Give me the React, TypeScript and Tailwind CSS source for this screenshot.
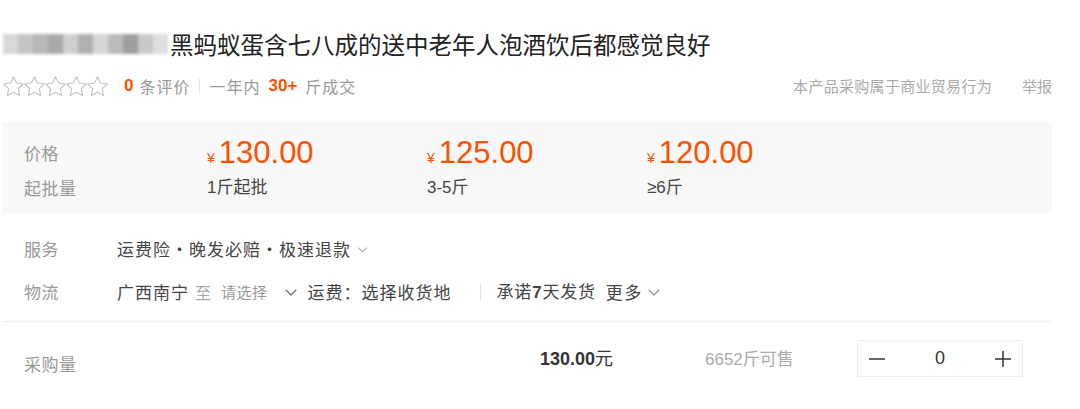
const cjk = "font-['Noto_Sans_CJK_SC',sans-serif]";
const num = "font-['Liberation_Sans','Noto_Sans_CJK_SC',sans-serif]";

const tiers = [
  { price: "130.00", qty: "1斤起批" },
  { price: "125.00", qty: "3-5斤" },
  { price: "120.00", qty: "≥6斤" },
];

const mosaic = ["#d9d9d9", "#c4c4c4", "#b8b8b8", "#a9a9a9", "#cfcfcf", "#b0b0b0", "#d6d6d6", "#bcbcbc", "#9e9e9e", "#c8c8c8", "#dedede"];

function Star() {
  return (
    <svg width="21" height="21" viewBox="2 2 20 20" fill="none" stroke="#c4c4c4" strokeWidth="1.1" strokeLinejoin="round">
      <path d="M12 2.8l2.8 5.9 6.5.9-4.7 4.5 1.2 6.4L12 17.4l-5.8 3.1 1.2-6.4-4.7-4.5 6.5-.9z" />
    </svg>
  );
}

function Chevron({ size = 12, color = "#999" }: { size?: number; color?: string }) {
  return (
    <svg width={size} height={size} viewBox="0 0 12 12" fill="none" stroke={color} strokeWidth="1.2">
      <path d="M1.5 4l4.5 4.5L10.5 4" />
    </svg>
  );
}

export default function App() {
  return (
    <div className={`w-[1080px] h-[409px] bg-white overflow-hidden ${cjk}`}>
      <div className="pl-[3px] w-[1052px]">
        {/* Title */}
        <div className="mt-[30px] h-[28px] flex items-center">
          <div className="flex blur-[1.5px] mr-[2px]">
            {mosaic.map((c, i) => (
              <div key={i} className="w-[15px] h-[20px]" style={{ backgroundColor: c }} />
            ))}
          </div>
          <h1 className="text-[23.5px] leading-[28px] text-[#222]">
            黑蚂蚁蛋含七八成的送中老年人泡酒饮后都感觉良好
          </h1>
        </div>

        {/* Stats */}
        <div className="mt-[16px] h-[24px] flex items-center text-[16px] text-[#999]">
          <div className="flex">
            {[0, 1, 2, 3, 4].map((i) => (
              <Star key={i} />
            ))}
          </div>
          <span className={`ml-[16px] ${num} font-bold text-[#ff5000] text-[17px]`}>0</span>
          <span className="ml-[6px] tracking-[1px]">条评价</span>
          <span className="mx-[9px] w-px h-[16px] bg-[#e5e5e5]" />
          <span className="tracking-[1px]">一年内</span>
          <span className={`ml-[8px] ${num} font-bold text-[#ff5000] text-[17px]`}>30+</span>
          <span className="ml-[8px] tracking-[1px]">斤成交</span>
          <span className="ml-auto text-[15px] text-[#aaa] tracking-[0.3px]">本产品采购属于商业贸易行为</span>
          <span className="ml-[30px] text-[15px] text-[#aaa]">举报</span>
        </div>

        {/* Price box */}
        <div className="mt-[24px] bg-[#f8f8f8] pt-[13px] pb-[13px] pl-[21px]">
          <div className="flex h-[36px] items-center">
            <div className="w-[183px] text-[17px] text-[#999] tracking-[0.5px]">价格</div>
            {tiers.map((t) => (
              <div key={t.price} className="w-[220px] flex items-baseline text-[#ff5000]">
                <span className={`${num} text-[14px] mr-[4px]`}>¥</span>
                <span className={`${num} text-[31px] leading-[36px]`}>{t.price}</span>
              </div>
            ))}
          </div>
          <div className="mt-[5px] flex h-[24px] items-center">
            <div className="w-[183px] text-[17px] text-[#999] tracking-[0.5px]">起批量</div>
            {tiers.map((t) => (
              <div key={t.qty} className={`w-[220px] text-[17px] text-[#444] ${num}`}>
                {t.qty}
              </div>
            ))}
          </div>
        </div>

        {/* Service */}
        <div className="mt-[24px] h-[24px] flex items-center pl-[21px] text-[17px]">
          <div className="w-[93px] text-[#999] tracking-[0.5px]">服务</div>
          <span className="text-[#444] tracking-[1px]">运费险・晚发必赔・极速退款</span>
          <span className="ml-[6px]">
            <Chevron size={11} color="#aaa" />
          </span>
        </div>

        {/* Logistics */}
        <div className="mt-[19px] h-[24px] flex items-center pl-[21px] text-[17px]">
          <div className="w-[93px] text-[#999] tracking-[0.5px]">物流</div>
          <span className="text-[#444] tracking-[1px]">广西南宁</span>
          <span className="ml-[6px] text-[#aaa] text-[16px]">至</span>
          <span className="ml-[10px] text-[#999] text-[15px] tracking-[0.5px]">请选择</span>
          <span className="ml-[16px]">
            <Chevron size={14} color="#777" />
          </span>
          <span className="ml-[10px] text-[#444] tracking-[1px]">运费：选择收货地</span>
          <span className="ml-[28px] w-px h-[16px] bg-[#e5e5e5]" />
          <span className="ml-[16px] text-[#444] tracking-[0.8px]">
            承诺<span className={`${num} font-bold`}>7</span>天发货
          </span>
          <span className="ml-[10px] text-[#444] tracking-[1.5px]">更多</span>
          <span className="ml-[4px]">
            <Chevron size={14} color="#999" />
          </span>
        </div>

        {/* Divider */}
        <div className="mt-[17px] border-t border-dotted border-[#ddd]" />

        {/* Quantity */}
        <div className="mt-[18px] h-[37px] flex items-center pl-[21px]">
          <div className="w-[516px] text-[17px] text-[#999] tracking-[0.5px] pt-[10px]">采购量</div>
          <div className="w-[165px] text-[#333]">
            <span className={`${num} font-bold text-[18px]`}>130.00</span>
            <span className="text-[18px]">元</span>
          </div>
          <div className="w-[152px] text-[17px] text-[#aaa]">
            <span className={num}>6652</span>斤可售
          </div>
          <div className="w-[166px] h-[37px] border border-[#eee] flex items-center justify-between px-[10px] text-[#333]">
            <svg width="18" height="18" viewBox="0 0 18 18" stroke="#333" strokeWidth="1.5">
              <path d="M1 9h16" />
            </svg>
            <span className={`${num} text-[18px]`}>0</span>
            <svg width="18" height="18" viewBox="0 0 18 18" stroke="#333" strokeWidth="1.5">
              <path d="M1 9h16M9 1v16" />
            </svg>
          </div>
        </div>
      </div>
    </div>
  );
}
